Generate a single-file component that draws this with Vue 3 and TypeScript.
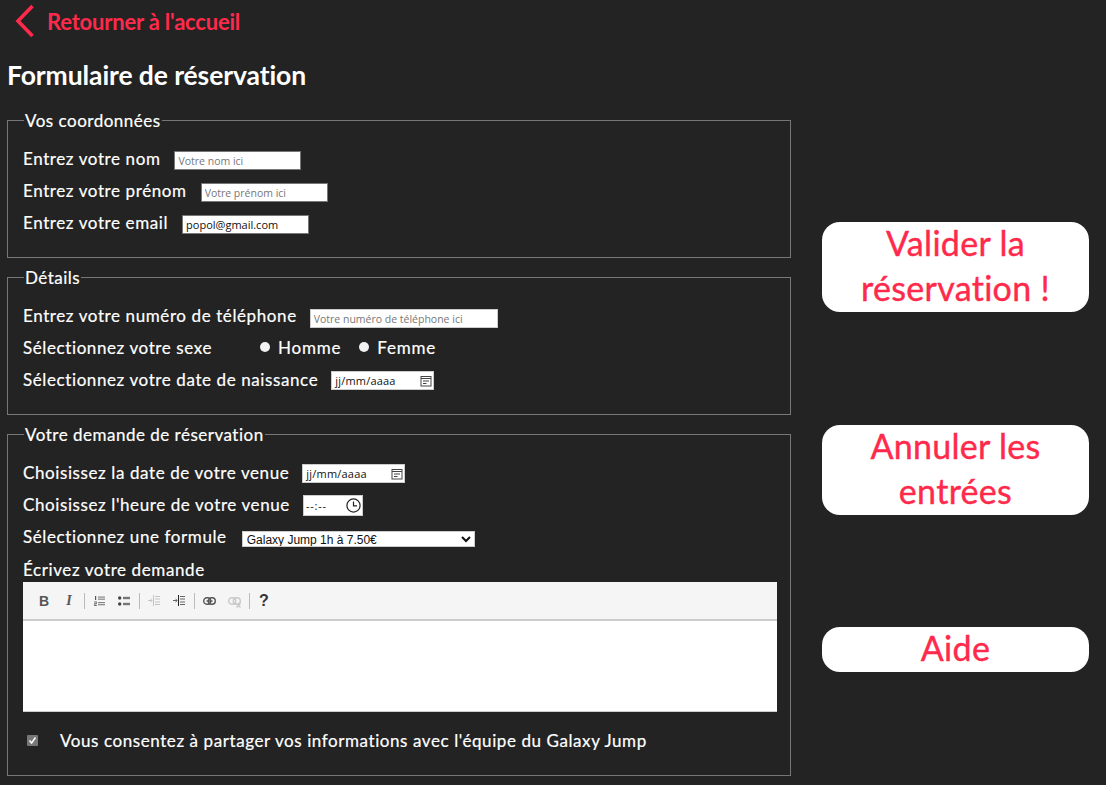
<script setup lang="ts">
const tools = ['b', 'i', 'sep', 'ol', 'ul', 'sep', 'out', 'in', 'sep', 'link', 'unlink', 'sep', 'help']
</script>

<template>
  <div class="page">
    <main class="left">
      <a class="back" href="#">
        <svg class="chev" width="20" height="34" viewBox="0 0 20 34"><path d="M17.5 2 L3 17 L17.5 32" fill="none" stroke="#ff2a4b" stroke-width="3.6" /></svg>
        <span>Retourner à l'accueil</span>
      </a>
      <h1>Formulaire de réservation</h1>

      <form>
        <fieldset class="fs-a">
          <legend>Vos coordonnées</legend>
          <div class="row"><label>Entrez votre nom</label><input class="txt dark w127 g14" placeholder="Votre nom ici" /></div>
          <div class="row"><label>Entrez votre prénom</label><input class="txt dark w127 g14" placeholder="Votre prénom ici" /></div>
          <div class="row"><label>Entrez votre email</label><input class="txt dark w127 g14" value="popol@gmail.com" /></div>
        </fieldset>

        <fieldset class="fs-a">
          <legend>Détails</legend>
          <div class="row"><label>Entrez votre numéro de téléphone</label><input class="txt w188 g13 low" placeholder="Votre numéro de téléphone ici" /></div>
          <div class="row">
            <label class="sexe">Sélectionnez votre sexe</label>
            <span class="radio"></span><span class="opt">Homme</span>
            <span class="radio r2"></span><span class="opt">Femme</span>
          </div>
          <div class="row">
            <label>Sélectionnez votre date de naissance</label>
            <div class="date g13"><span>jj/mm/aaaa</span>
              <svg width="12" height="12" viewBox="0 0 12 12"><g fill="none" stroke="#444"><rect x="1" y="1.5" width="10" height="9.5" /><path d="M1 3.5H11M3 6H9M3 8.5H6.5" /></g></svg>
            </div>
          </div>
        </fieldset>

        <fieldset class="fs-b">
          <legend>Votre demande de réservation</legend>
          <div class="row"><label>Choisissez la date de votre venue</label>
            <div class="date g13"><span>jj/mm/aaaa</span>
              <svg width="12" height="12" viewBox="0 0 12 12"><g fill="none" stroke="#444"><rect x="1" y="1.5" width="10" height="9.5" /><path d="M1 3.5H11M3 6H9M3 8.5H6.5" /></g></svg>
            </div>
          </div>
          <div class="row"><label>Choisissez l'heure de votre venue</label>
            <div class="time g13"><span>--:--</span>
              <svg width="15" height="15" viewBox="0 0 15 15"><g fill="none" stroke="#222" stroke-width="1.2"><circle cx="7.5" cy="7.5" r="6.6" /><path d="M7.5 3.5V7.8H11" /></g></svg>
            </div>
          </div>
          <div class="row"><label>Sélectionnez une formule</label>
            <select class="sel g15"><option>Galaxy Jump 1h à 7.50€</option></select>
          </div>
          <div class="lbl-ed">Écrivez votre demande</div>
          <div class="editor">
            <div class="toolbar">
              <template v-for="(t, i) in tools" :key="i">
                <span v-if="t === 'sep'" class="sep"></span>
                <span v-else class="tool">
                  <b v-if="t === 'b'" class="tb">B</b>
                  <i v-else-if="t === 'i'" class="ti">I</i>
                  <b v-else-if="t === 'help'" class="th">?</b>
                  <svg v-else-if="t === 'ol'" width="11" height="10" viewBox="0 0 11 10"><g fill="#888"><rect x="4" y="0.5" width="7" height="1.2" /><rect x="4" y="2.6" width="7" height="1.2" /><rect x="4" y="6" width="7" height="1.2" /><rect x="4" y="8.1" width="7" height="1.2" /></g><g fill="#555"><rect x="1" y="0" width="1.2" height="4" /><rect x="0.2" y="5.5" width="2.6" height="0.9" /><rect x="2" y="6.4" width="0.9" height="0.9" /><rect x="0.2" y="7.3" width="2.6" height="0.9" /><rect x="0.2" y="8.2" width="0.9" height="0.9" /><rect x="0.2" y="9.1" width="2.6" height="0.9" /></g></svg>
                  <svg v-else-if="t === 'ul'" width="12" height="10" viewBox="0 0 12 10"><g fill="#444"><circle cx="1.7" cy="2" r="1.7" /><circle cx="1.7" cy="8" r="1.7" /></g><g fill="#777"><rect x="5" y="0.8" width="7" height="2.4" /><rect x="5" y="6.8" width="7" height="2.4" /></g></svg>
                  <svg v-else-if="t === 'out'" width="12" height="11" viewBox="0 0 12 11"><g fill="none" stroke="#c4c4c4"><path d="M5.5 0V11M7 1.5H12M7 4H12M7 7H12M7 9.5H12M0 5.5H4M2.5 4L4.3 5.5L2.5 7" /></g></svg>
                  <svg v-else-if="t === 'in'" width="12" height="11" viewBox="0 0 12 11"><path d="M5.5 0V11" stroke="#222" fill="none" /><g fill="none" stroke="#666"><path d="M7 1.5H12M7 4H12M7 7H12M7 9.5H12M0 5.5H4M2.5 4L4.3 5.5L2.5 7" /></g></svg>
                  <svg v-else-if="t === 'link'" width="13" height="8" viewBox="0 0 13 8"><g fill="none" stroke="#555" stroke-width="1.4"><rect x="0.7" y="0.7" width="7" height="6.6" rx="3.2" /><rect x="5.3" y="0.7" width="7" height="6.6" rx="3.2" /><path d="M3.5 4H9.5" /></g></svg>
                  <svg v-else class="unl" width="13" height="11" viewBox="0 0 13 11"><g fill="none" stroke="#c8c8c8" stroke-width="1.4"><rect x="0.7" y="0.7" width="7" height="6.6" rx="3.2" /><rect x="5.3" y="0.7" width="7" height="6.6" rx="3.2" /><path d="M8.5 6.5L12.5 10.5M12.5 6.5L8.5 10.5" /></g></svg>
                </span>
              </template>
            </div>
            <div class="area"></div>
          </div>
          <div class="consent">
            <span class="check"><svg width="9" height="9" viewBox="0 0 9 9"><path d="M1.5 4.5L3.6 7L7.5 1.5" fill="none" stroke="#fff" stroke-width="1.5" /></svg></span>
            <span>Vous consentez à partager vos informations avec l'équipe du Galaxy Jump</span>
          </div>
        </fieldset>
      </form>
    </main>

    <aside class="right">
      <button class="cta b1" type="button"><span class="lab">Valider la réservation !</span></button>
      <button class="cta b2" type="button"><span class="lab">Annuler les entrées</span></button>
      <button class="cta b3" type="button"><span class="lab">Aide</span></button>
    </aside>
  </div>
</template>

<style>
html, body { margin: 0; background: #232323; }
</style>

<style scoped>
.page {
  width: 1106px;
  height: 785px;
  overflow: hidden;
  background: #232323;
  color: #fff;
  font-family: Lato, "Open Sans", sans-serif;
  display: flex;
  align-items: flex-start;
}
.left { width: 784px; margin-left: 7px; flex: none; }
.back {
  display: flex;
  align-items: center;
  gap: 12px;
  box-sizing: border-box;
  height: 44px;
  padding: 0 0 2px 8px;
  color: #ff2a4b;
  font-size: 22px;
  font-weight: 700;
  text-decoration: none;
  letter-spacing: -0.2px;
}
h1 {
  margin: 0;
  height: 64px;
  line-height: 62px;
  font-size: 26.5px;
  font-weight: 700;
  letter-spacing: -0.1px;
}
form { display: flex; flex-direction: column; gap: 10px; margin-top: 3px; }
fieldset {
  margin: 0;
  padding: 0 13px 0 15px;
  border: 1px solid #777;
  min-width: 0;
  box-sizing: border-box;
}
.fs-a { height: 147px; }
.fs-b { height: 351px; }
legend {
  margin-left: 1px;
  padding: 0 1px;
  height: 19px;
  line-height: 19px;
  font-size: 17px;
  letter-spacing: 0.5px;
  -webkit-text-stroke: 0.2px #fff;
}
.row {
  height: 32px;
  display: flex;
  align-items: center;
  font-size: 17px;
  letter-spacing: 0.6px;
  -webkit-text-stroke: 0.2px #fff;
}
legend + .row { margin-top: 12px; }
label { white-space: nowrap; }
.g13 { margin-left: 13px; }
.g14 { margin-left: 14px; }
.g15 { margin-left: 15px; }
.txt, .date, .time, .sel {
  box-sizing: border-box;
  height: 19px;
  margin-top: 3px;
  background: #fff;
  border: 1px solid #ccc;
  border-radius: 0;
  color: #111;
  font-family: "Open Sans", sans-serif;
  font-size: 11px;
  letter-spacing: 0;
  -webkit-text-stroke: 0;
}
.txt { padding: 0 3px; outline: none; }
.dark { border-color: #777; margin-top: 5px; }
.low { margin-top: 6px; }
.txt::placeholder { color: #777; opacity: 1; font-size: 10.5px; }
.w127 { width: 127px; }
.w188 { width: 188px; }
.date, .time { display: flex; align-items: center; justify-content: space-between; padding: 0 1px 0 3px; }
.date { width: 103px; letter-spacing: 0.2px; }
.time { width: 60px; height: 21px; letter-spacing: 0.8px; padding-left: 2px; }
.sel {
  width: 233px;
  height: 16px;
  margin-top: 5px;
  padding: 0;
  font-family: "Liberation Sans", sans-serif;
  font-size: 12px;
}
.sexe { width: 237px; }
.radio {
  width: 10px;
  height: 10px;
  border-radius: 50%;
  background: #f2f2f2;
  flex: none;
}
.opt { margin-left: 8px; letter-spacing: 0.8px; }
.r2 { margin-left: 18px; }
.lbl-ed {
  height: 16px;
  font-size: 17px;
  line-height: 16px;
  letter-spacing: 0.6px;
  margin-top: 10px;
  -webkit-text-stroke: 0.2px #fff;
}
.editor { margin-top: 4px; width: 754px; }
.toolbar {
  height: 39px;
  box-sizing: border-box;
  background: #f5f5f5;
  border-bottom: 2px solid #ccc;
  display: flex;
  align-items: center;
  padding-left: 8.5px;
}
.tool { width: 25px; flex: none; display: flex; justify-content: center; align-items: center; color: #444; }
.sep { width: 1px; height: 16px; background: #bbb; flex: none; margin: 0 2px; }
.unl { margin-top: 3px; }
.tb, .ti { font-family: "Liberation Sans", sans-serif; font-size: 14px; }
.tb { color: #555; }
.ti { font-family: "Liberation Serif", serif; font-weight: 700; font-style: italic; color: #555; }
.th { font-family: "Liberation Sans", sans-serif; font-size: 16px; color: #333; }
.area { height: 91px; background: #fff; border-bottom: 1px solid #ccc; box-sizing: border-box; }
.consent {
  display: flex;
  align-items: center;
  gap: 22px;
  margin: 18px 0 0 4px;
  font-size: 17px;
  letter-spacing: 0.58px;
  -webkit-text-stroke: 0.2px #fff;
}
.check {
  width: 11px;
  height: 11px;
  background: #777;
  border-radius: 1px;
  display: flex;
  align-items: center;
  justify-content: center;
  flex: none;
}
.right { flex: none; width: 267px; margin-left: 31px; padding-top: 222px; display: flex; flex-direction: column; }
.cta {
  width: 267px;
  border: none;
  background: #fff;
  border-radius: 18px;
  color: #ff2a4b;
  font-family: Lato, sans-serif;
  font-size: 34px;
  line-height: 45px;
  padding: 0 30px;
  text-align: center;
  letter-spacing: 0.3px;
  -webkit-text-stroke: 0.4px #ff2a4b;
}
.lab { display: block; margin-top: -4px; }
.b1, .b2 { height: 90px; }
.b3 { height: 45px; }
.b2 { margin-top: 113px; }
.b3 { margin-top: 112px; }
</style>
